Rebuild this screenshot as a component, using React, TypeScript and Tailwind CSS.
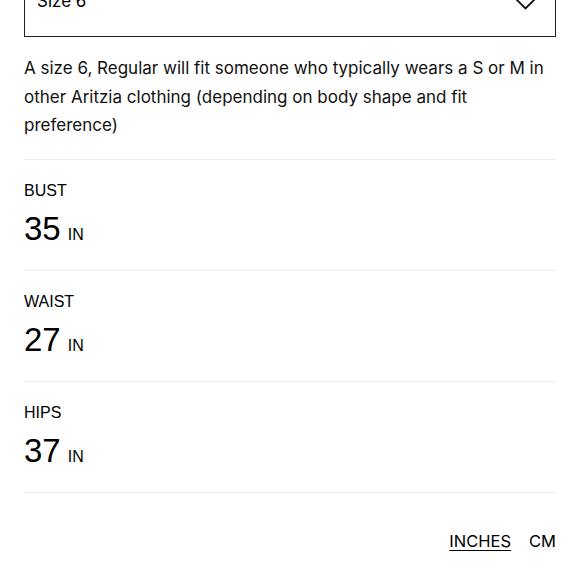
const measurements = [
  { label: 'BUST', value: 35 },
  { label: 'WAIST', value: 27 },
  { label: 'HIPS', value: 37 },
];

export default function App() {
  return (
    <div className="w-[580px] h-[580px] overflow-hidden bg-white px-6 text-black">
      <div className="-mt-[23px] h-[60px] border-[1.5px] border-[#222] flex items-center justify-between pl-[12px] pr-[18px] pb-[10px]">
        <span className="text-[17px] font-['Inter',sans-serif]">Size 6</span>
        <svg width="23" height="13" viewBox="0 0 23 13" fill="none" className="mt-[2px]">
          <path d="M1 1 L11.5 11.5 L22 1" stroke="#111" strokeWidth="1.8" />
        </svg>
      </div>

      <p className="mt-[17px] mb-[19px] text-[17px] leading-[28.5px] font-['Inter',sans-serif] text-[#111]">
        A size 6, Regular will fit someone who typically wears a S or M in other Aritzia clothing
        (depending on body shape and fit preference)
      </p>

      {measurements.map(({ label, value }) => (
        <div key={label} className="border-t border-[#ececec] pt-[19px] pb-[21px]">
          <div className="text-[16px] leading-[24px] font-['Liberation_Sans',Arial,sans-serif]">
            {label}
          </div>
          <div className="mt-[6px] h-[40px] flex items-baseline font-['Liberation_Sans',Arial,sans-serif]">
            <span className="text-[33px] leading-[40px]">{value}</span>
            <span className="text-[16px] leading-[20px] ml-[7px]">IN</span>
          </div>
        </div>
      ))}

      <div className="border-t border-[#ececec] flex justify-end gap-[18px] pt-[38px] text-[16.5px] leading-[20px] font-['Inter',sans-serif]">
        <button className="underline underline-offset-[3px]">INCHES</button>
        <button>CM</button>
      </div>
    </div>
  );
}
